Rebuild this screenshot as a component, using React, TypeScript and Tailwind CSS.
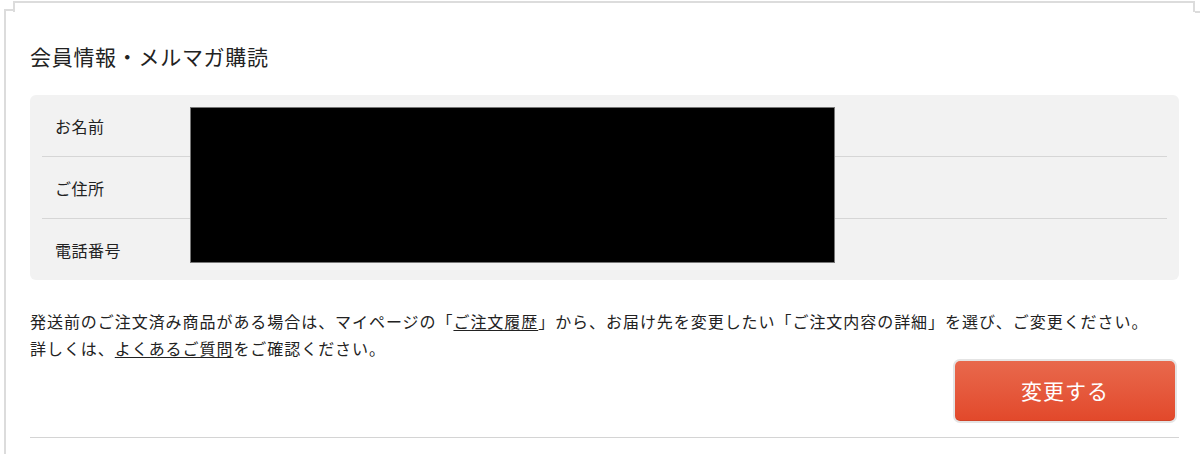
import React from 'react';

const rows = ['お名前', 'ご住所', '電話番号'];

export default function App() {
  return (
    <div
      className="w-[1200px] h-[454px] overflow-hidden bg-white text-[#222]"
      style={{ fontFamily: '"Noto Sans CJK JP", "Noto Sans", sans-serif' }}
    >
      {/* top edge of the card frame */}
      <div className="flex h-[12px]">
        <div className="w-[4px]" />
        <div className="w-[9px] mt-[9px] border-t-2 border-l-2 border-[#dcdcdc]" />
        <div className="flex-1 mt-[1px] border-t-2 border-l-2 border-r-2 border-[#dcdcdc]" />
        <div className="w-[5px] mt-[11px] border-t-2 border-[#dcdcdc]" />
      </div>

      <div className="ml-[4px] border-l-2 border-[#dcdcdc] pl-[24px] pr-[21px] pt-[28px] h-[442px]">
        <h1 className="text-[21px] leading-[32px] tracking-[0.7px] font-normal">会員情報・メルマガ購読</h1>

        <div className="relative mt-[23px] bg-[#f2f2f2] rounded-[6px] px-[12px]">
          {rows.map((label, i) => (
            <div
              key={label}
              className={`flex items-center pl-[13px] text-[16px] tracking-[0.5px] ${
                i < rows.length - 1 ? 'border-b border-[#d6d6d6] h-[62px]' : 'h-[61px]'
              }`}
            >
              {label}
            </div>
          ))}
          {/* redaction */}
          <div className="absolute left-[160px] top-[12px] w-[645px] h-[156px] bg-black border border-[#777]" />
        </div>

        <p className="mt-[28px] text-[16px] leading-[27px] tracking-[0.95px]">
          発送前のご注文済み商品がある場合は、マイページの「<span className="underline underline-offset-2">ご注文履歴</span>」から、お届け先を変更したい「ご注文内容の詳細」を選び、ご変更ください。
          <br />
          詳しくは、<span className="underline underline-offset-2">よくあるご質問</span>をご確認ください。
        </p>

        <div className="flex justify-end pr-[2px] -mt-[3px]">
          <div className="rounded-[7px] border-2 border-[#e4e4e4]">
            <button className="w-[220px] h-[60px] rounded-[5px] bg-gradient-to-b from-[#e8684c] to-[#e2482a] text-white text-[21px] tracking-[1px] shadow-[inset_0_-1px_0_rgba(0,0,0,0.08)]">
              変更する
            </button>
          </div>
        </div>

        <div className="mt-[14px] border-b border-[#d4d4d4]" />
      </div>
    </div>
  );
}
